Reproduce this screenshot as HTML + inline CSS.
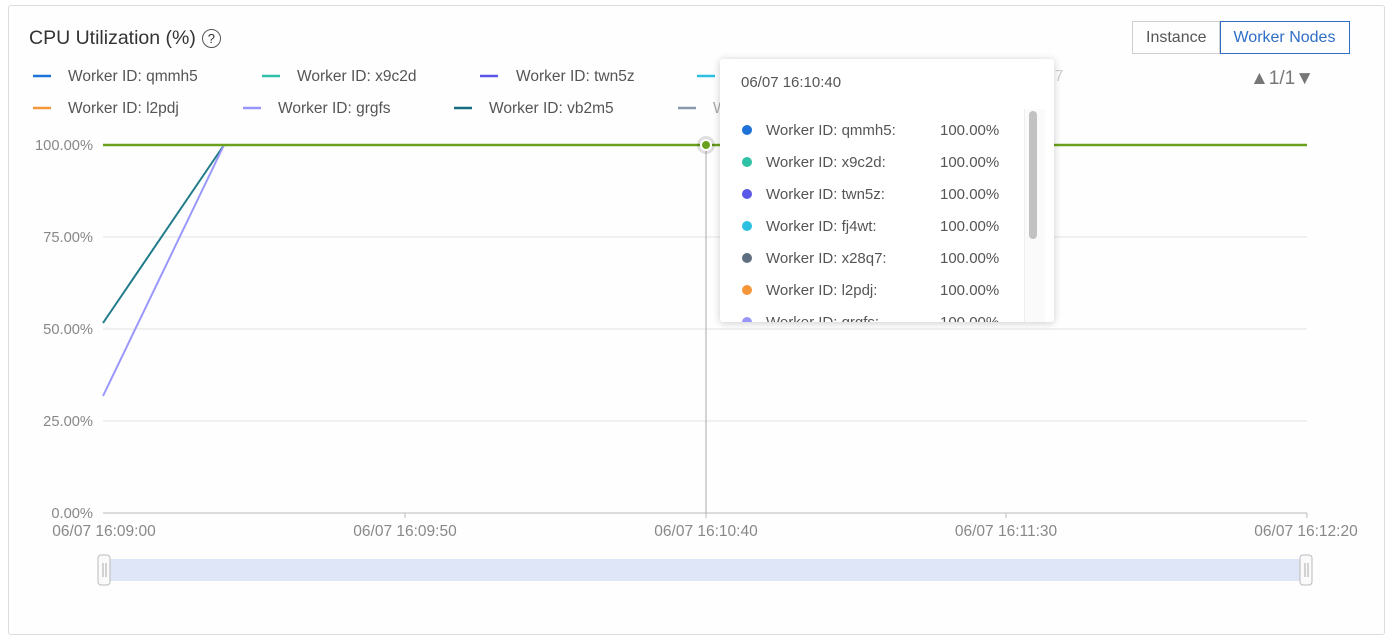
<!DOCTYPE html>
<html><head><meta charset="utf-8"><style>
body{margin:0;width:1388px;height:642px;background:#fff;font-family:"Liberation Sans",sans-serif;overflow:hidden;position:relative}
.card{position:absolute;left:8px;top:5px;width:1375px;height:628px;border:1px solid #dcdcdc;border-radius:3px;background:#fefefe}
.title{position:absolute;left:29px;top:27px;font-size:19.5px;color:#333}
.q{display:inline-block;width:17px;height:17px;border:1.5px solid #555;border-radius:50%;font-size:13px;text-align:center;line-height:17px;margin-left:6px;vertical-align:1px}
.btns{position:absolute;left:1132px;top:21px;display:flex;font-size:16px}
.btns div{height:31px;line-height:31px;padding:0 13px;border:1px solid #d0d0d0;color:#555}
.btns .a{border-color:#2f6ec7;color:#2f6ec7;padding:0 14px 0 12px}
.tt{position:absolute;left:720px;top:59px;width:334px;height:263px;background:#fff;box-shadow:0 1px 8px rgba(0,0,0,.2);border-radius:3px;overflow:hidden;font-size:15px;color:#555}
.row{position:absolute;left:20px;height:20px}
.dot{position:absolute;left:2px;top:3px;width:10px;height:10px;border-radius:50%}
.row span{position:absolute;left:26px;white-space:nowrap}
.row b{position:absolute;left:200px;font-weight:normal;white-space:nowrap}
</style></head><body>
<div class="card"></div>
<div class="title">CPU Utilization (%)<span class="q">?</span></div>
<div class="btns"><div>Instance</div><div class="a">Worker Nodes</div></div>
<svg width="1388" height="642" style="position:absolute;left:0;top:0" font-family="Liberation Sans" font-size="15.5">
<g fill="#555">
<text x="68" y="81">Worker ID: qmmh5</text><text x="297" y="81">Worker ID: x9c2d</text><text x="516" y="81">Worker ID: twn5z</text>
<text x="943" y="81" fill="#ccc">Worker ID: x28q7</text>
<text x="68" y="113">Worker ID: l2pdj</text><text x="278" y="113">Worker ID: grgfs</text><text x="489" y="113">Worker ID: vb2m5</text>
<text x="713" y="113" fill="#aaa">Worker ID: z5t7v</text><text x="926" y="113" fill="#ddd">Worker ID: 7r4kd</text>
</g>
<g stroke-width="2.5">
<line x1="33" y1="76" x2="51" y2="76" stroke="#1f72d8"/><line x1="262" y1="76" x2="280" y2="76" stroke="#2ec1a5"/><line x1="480" y1="76" x2="498" y2="76" stroke="#5b57e8"/><line x1="697" y1="76" x2="715" y2="76" stroke="#2bc0df"/><line x1="908" y1="76" x2="926" y2="76" stroke="#eee"/>
<line x1="33" y1="108" x2="51" y2="108" stroke="#f5963a"/><line x1="243" y1="108" x2="261" y2="108" stroke="#9996fa"/><line x1="454" y1="108" x2="472" y2="108" stroke="#176b7f"/><line x1="678" y1="108" x2="696" y2="108" stroke="#8a99aa"/><line x1="890" y1="108" x2="908" y2="108" stroke="#eee"/>
</g>
<text x="1250" y="84" fill="#777" font-size="19">▲1/1▼</text>
<g stroke="#e3e3e3"><line x1="103" y1="237" x2="1307" y2="237"/><line x1="103" y1="329" x2="1307" y2="329"/><line x1="103" y1="421" x2="1307" y2="421"/></g>
<line x1="103" y1="513" x2="1307" y2="513" stroke="#bbb"/>
<g stroke="#bbb"><line x1="405" y1="513" x2="405" y2="518"/><line x1="706" y1="513" x2="706" y2="518"/><line x1="1006" y1="513" x2="1006" y2="518"/><line x1="1307" y1="513" x2="1307" y2="518"/></g>
<g fill="#888" text-anchor="end" font-size="14.7"><text x="93" y="150">100.00%</text><text x="93" y="242">75.00%</text><text x="93" y="334">50.00%</text><text x="93" y="426">25.00%</text><text x="93" y="518">0.00%</text></g>
<g fill="#888" text-anchor="middle"><text x="104" y="536">06/07 16:09:00</text><text x="405" y="536">06/07 16:09:50</text><text x="706" y="536">06/07 16:10:40</text><text x="1006" y="536">06/07 16:11:30</text><text x="1306" y="536">06/07 16:12:20</text></g>
<line x1="706" y1="145" x2="706" y2="513" stroke="#aaa"/>
<line x1="103" y1="323" x2="224" y2="145" stroke="#217b8a" stroke-width="2"/>
<line x1="103" y1="396" x2="224" y2="145" stroke="#9a98fb" stroke-width="2"/>
<line x1="103" y1="145" x2="1307" y2="145" stroke="#6aa11c" stroke-width="2.5"/>
<circle cx="706" cy="145" r="9" fill="rgba(0,0,0,.12)"/><circle cx="706" cy="145" r="5" fill="#6aa11c" stroke="#fff" stroke-width="2"/>
<rect x="105" y="559" width="1200" height="22" fill="#dfe6f7"/>
<rect x="98" y="555" width="12" height="30" rx="3" fill="#fafafa" stroke="#bbb"/><rect x="1300" y="555" width="12" height="30" rx="3" fill="#fafafa" stroke="#bbb"/>
<g stroke="#aaa"><line x1="103" y1="563" x2="103" y2="577"/><line x1="106" y1="563" x2="106" y2="577"/><line x1="1305" y1="563" x2="1305" y2="577"/><line x1="1308" y1="563" x2="1308" y2="577"/></g>
</svg>
<div class="tt">
<div style="position:absolute;left:21px;top:15px">06/07 16:10:40</div>
<div style="position:absolute;left:304px;top:50px;width:20px;height:213px;border-left:1px solid #eee;background:#fafafa"></div>
<div style="position:absolute;left:309px;top:52px;width:8px;height:128px;background:#c2c2c2;border-radius:4px"></div>
<div class="row" style="top:63px"><i class="dot" style="background:#1f72d8"></i><span>Worker ID: qmmh5:</span><b>100.00%</b></div>
<div class="row" style="top:95px"><i class="dot" style="background:#2ec1a5"></i><span>Worker ID: x9c2d:</span><b>100.00%</b></div>
<div class="row" style="top:127px"><i class="dot" style="background:#5b57e8"></i><span>Worker ID: twn5z:</span><b>100.00%</b></div>
<div class="row" style="top:159px"><i class="dot" style="background:#2bc0df"></i><span>Worker ID: fj4wt:</span><b>100.00%</b></div>
<div class="row" style="top:191px"><i class="dot" style="background:#5f6f82"></i><span>Worker ID: x28q7:</span><b>100.00%</b></div>
<div class="row" style="top:223px"><i class="dot" style="background:#f5963a"></i><span>Worker ID: l2pdj:</span><b>100.00%</b></div>
<div class="row" style="top:255px"><i class="dot" style="background:#9996fa"></i><span>Worker ID: grgfs:</span><b>100.00%</b></div>
</div>
</body></html>
